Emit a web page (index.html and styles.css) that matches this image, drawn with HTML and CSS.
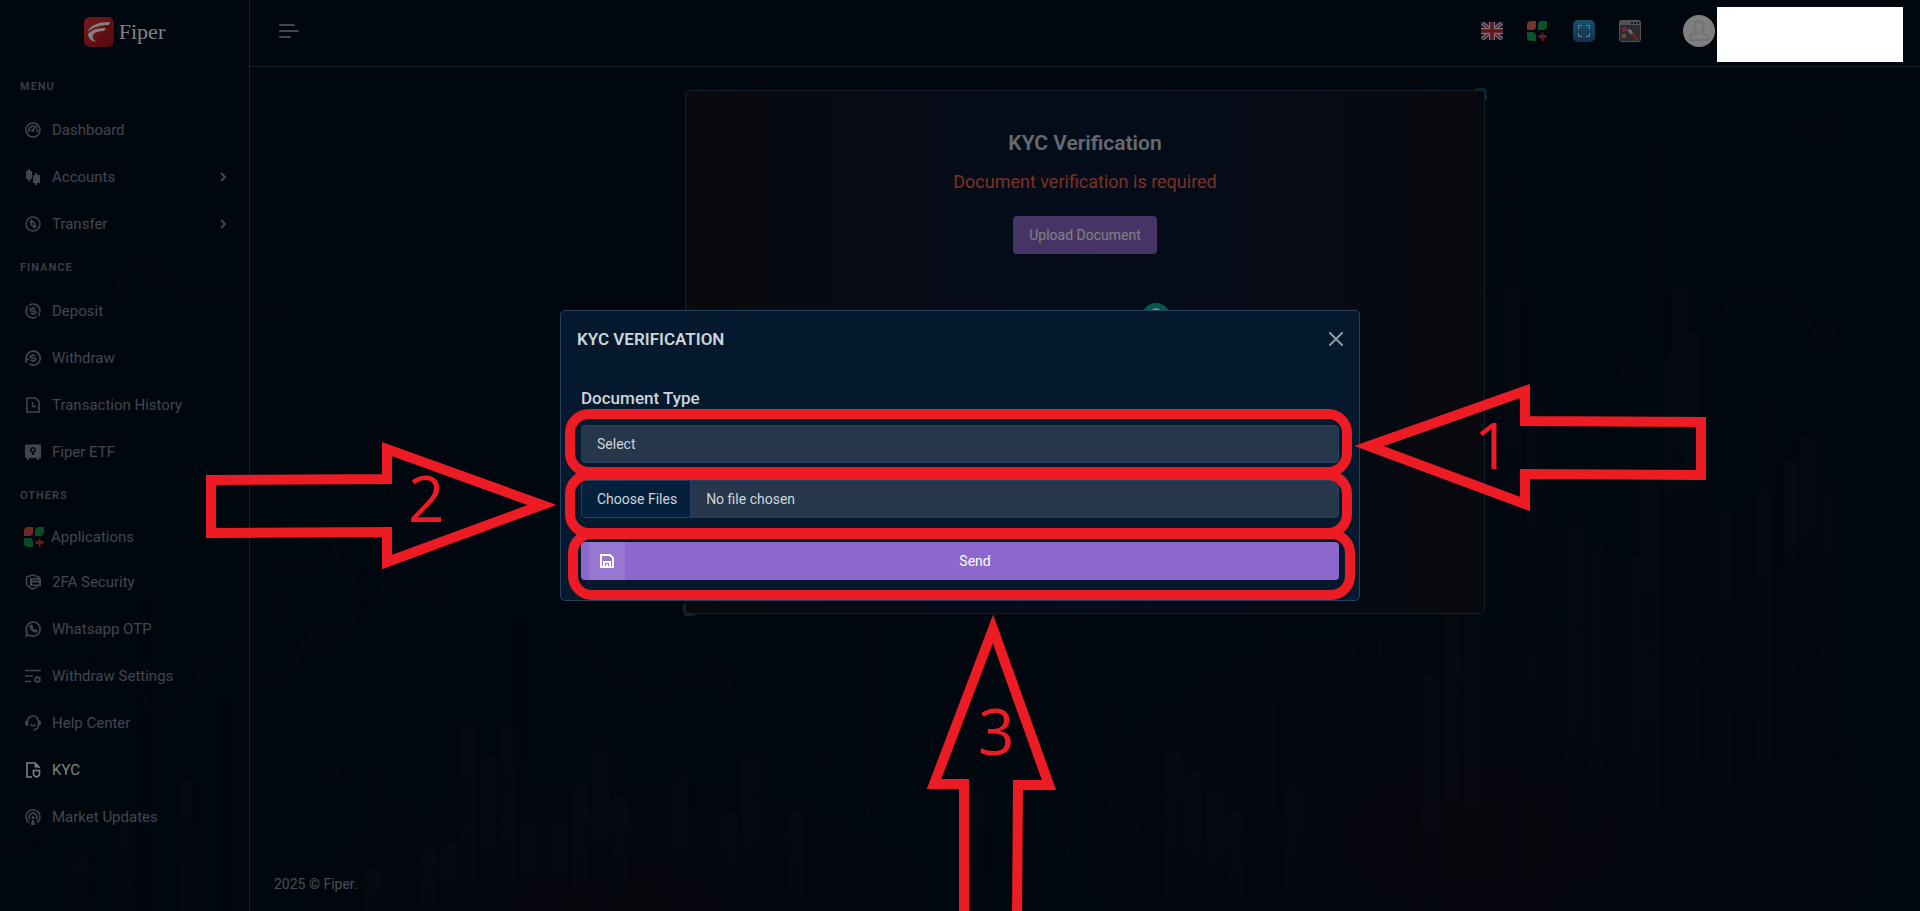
FILE: index.html
```html
<!DOCTYPE html>
<html lang="en">
<head>
    <meta charset="UTF-8">
    <meta name="viewport" content="width=device-width, initial-scale=1.0">
    <title>KYC Verification - Fiper</title>
    <link rel="stylesheet" href="styles.css">
</head>
<body>
    <!-- Background chart artwork -->
    <svg class="page-art" viewBox="0 0 1920 911" preserveAspectRatio="xMidYMax slice" aria-hidden="true">
        <defs>
            <linearGradient id="bar" x1="0" y1="0" x2="0" y2="1">
                <stop offset="0" stop-color="#182030"/>
                <stop offset="1" stop-color="#0b1020"/>
            </linearGradient>
            <radialGradient id="glow">
                <stop offset="0" stop-color="#100e1c"/>
                <stop offset="1" stop-color="#100e1c" stop-opacity="0"/>
            </radialGradient>
        </defs>
        <ellipse cx="620" cy="911" rx="330" ry="130" fill="url(#glow)"/>
        <ellipse cx="1480" cy="840" rx="420" ry="230" fill="url(#glow)"/>
        <g fill="url(#bar)" opacity=".4">
            <rect x="73" y="856" width="17" height="60" rx="8"/>
            <rect x="120" y="820" width="14" height="95" rx="7"/>
            <rect x="179" y="780" width="14" height="135" rx="7"/>
            <rect x="365" y="867" width="15" height="50" rx="7"/>
            <rect x="421" y="847" width="16" height="70" rx="8"/>
            <rect x="441" y="842" width="16" height="75" rx="8"/>
            <rect x="459" y="722" width="17" height="190" rx="8"/>
            <rect x="480" y="756" width="17" height="160" rx="8"/>
            <rect x="499" y="727" width="17" height="190" rx="8"/>
            <rect x="520" y="820" width="16" height="95" rx="8"/>
            <rect x="552" y="820" width="16" height="95" rx="8"/>
            <rect x="572" y="784" width="17" height="130" rx="8"/>
            <rect x="592" y="745" width="18" height="170" rx="8"/>
            <rect x="612" y="795" width="17" height="120" rx="8"/>
            <rect x="673" y="775" width="16" height="140" rx="8"/>
            <rect x="722" y="812" width="16" height="100" rx="8"/>
            <rect x="741" y="754" width="18" height="160" rx="8"/>
            <rect x="787" y="810" width="17" height="100" rx="8"/>
            <rect x="972" y="786" width="14" height="130" rx="7"/>
            <rect x="1165" y="751" width="17" height="160" rx="8"/>
            <rect x="1185" y="771" width="17" height="145" rx="8"/>
            <rect x="1206" y="791" width="17" height="125" rx="8"/>
            <rect x="1226" y="811" width="17" height="105" rx="8"/>
            <rect x="1285" y="786" width="17" height="130" rx="8"/>
            <rect x="1422" y="675" width="18" height="240" rx="8"/>
            <rect x="1444" y="590" width="17" height="320" rx="8"/>
            <rect x="1465" y="600" width="17" height="320" rx="8"/>
            <rect x="1504" y="283" width="17" height="600" rx="8"/>
            <rect x="1526" y="385" width="16" height="500" rx="8"/>
            <rect x="1566" y="522" width="17" height="380" rx="8"/>
            <rect x="1586" y="545" width="16" height="360" rx="8"/>
            <rect x="1626" y="557" width="17" height="330" rx="8"/>
            <rect x="1641" y="480" width="19" height="400" rx="8"/>
            <rect x="1664" y="355" width="16" height="500" rx="8"/>
            <rect x="1671" y="287" width="17" height="560" rx="8"/>
            <rect x="1685" y="332" width="14" height="520" rx="7"/>
            <rect x="1720" y="512" width="13" height="330" rx="6"/>
            <rect x="1757" y="488" width="15" height="330" rx="7"/>
            <rect x="1783" y="460" width="15" height="340" rx="7"/>
            <rect x="1799" y="436" width="16" height="350" rx="7"/>
            <rect x="1818" y="492" width="13" height="240" rx="6"/>
        </g>
        <g fill="none" stroke="#0a1222" stroke-width="2">
            <path d="M114 300q10-34 25-34 15 2 28 12c26 22 40 18 60 20 20 6 34 16 60 12"/>
            <path d="M95 660c40 5 40 46 68 50 34 0 30-56 66-56 22 4 32 26 48 26 24 0 20-48 44-60q32 20 40-18c6-26 10-70 40-80"/>
            <path d="M280 572c22 10 34-20 56-18 12 20 24 42 40 44 10-10 16-34 20-54"/>
            <path d="M560 640c50 20 60 48 90 50 26 2 42-22 64-24"/>
            <path d="M1470 290q36 10 60 5m190 25q20-40 54-26 30 16 50 52"/>
            <path d="M144 596v315M224 696v215M520 615v150M867 615v200M1067 655v200M1115 700v150M1274 630v180M1380 640v240M1513 185v100M1654 150v180M1766 400v90M382 760v150"/>
        </g>
        <g fill="#0d101f">
            <circle cx="151" cy="273" r="5"/>
            <circle cx="103" cy="664" r="10"/>
            <circle cx="26" cy="845" r="8"/>
            <circle cx="317" cy="634" r="10"/>
            <circle cx="337" cy="551" r="5"/>
            <circle cx="283" cy="606" r="4"/>
            <circle cx="425" cy="589" r="10"/>
            <circle cx="333" cy="775" r="7"/>
            <circle cx="402" cy="808" r="6"/>
            <circle cx="402" cy="826" r="4"/>
            <circle cx="725" cy="682" r="8"/>
            <circle cx="825" cy="760" r="6"/>
            <circle cx="1068" cy="655" r="5"/>
            <circle cx="1100" cy="777" r="5"/>
            <circle cx="1115" cy="806" r="8"/>
            <circle cx="1135" cy="829" r="6"/>
            <circle cx="1350" cy="649" r="8"/>
            <circle cx="1368" cy="642" r="7"/>
            <circle cx="1381" cy="629" r="6"/>
            <circle cx="1397" cy="712" r="5"/>
            <circle cx="1332" cy="756" r="6"/>
            <circle cx="1513" cy="195" r="7"/>
            <circle cx="1819" cy="130" r="11"/>
            <circle cx="1626" cy="373" r="7"/>
            <circle cx="1831" cy="335" r="5"/>
            <circle cx="1735" cy="664" r="6"/>
            <circle cx="1694" cy="757" r="7"/>
            <circle cx="1844" cy="756" r="6"/>
        </g>
    </svg>

    <div class="layout">
        <!-- Sidebar -->
        <aside class="sidebar">
            <a class="logo" href="#">
                <svg width="30" height="30" viewBox="0 0 30 30" aria-hidden="true">
                    <defs>
                        <linearGradient id="logo-red" x1="0" y1="0" x2="1" y2="1">
                            <stop offset="0" stop-color="#e8343e"/>
                            <stop offset="1" stop-color="#a80f14"/>
                        </linearGradient>
                    </defs>
                    <rect width="30" height="30" rx="6" fill="url(#logo-red)"/>
                    <path d="M3 15C7 8 14 5 26 5l-1 3C16 8 10 10 3 15z" fill="#fff"/>
                    <path d="M4 17c3-4 9-6 18-6l-2 3c-5 0-9 1-11 4-1 3 1 5 3 7-5-1-8-4-8-8z" fill="#fff"/>
                </svg>
                <span>Fiper</span>
            </a>

            <nav>
                <h6 class="menu-title">Menu</h6>
                <ul class="menu">
                    <li><a href="#">
                        <svg class="icon" viewBox="0 0 16 16"><circle cx="8" cy="8" r="7"/><path d="M4 10a4.500 4.500 0 0 1 6-5.500M12 7a4 4 0 0 1 0 3M7.500 8.500L12 4" /><circle class="fill" cx="7.500" cy="8.500" r="1.500"/></svg>
                        Dashboard</a></li>
                    <li><a href="#">
                        <svg class="icon" viewBox="0 0 16 16"><path class="fill" d="M3 0h2v2h2v8H5v2H3v-2H1V2h2zM10 4h2v2h3v8h-3v2h-2v-2H8V6h2z"/></svg>
                        Accounts
                        <svg class="chevron" width="8" height="10" viewBox="0 0 8 10"><path d="M2 1l4 4-4 4"/></svg></a></li>
                    <li><a href="#">
                        <svg class="icon" viewBox="0 0 16 16"><circle cx="8" cy="8" r="7"/><path d="M6.500 10V4.500M4.500 6.500l2-2 2 2M9.500 6v5.500M7.500 9.500l2 2 2-2"/></svg>
                        Transfer
                        <svg class="chevron" width="8" height="10" viewBox="0 0 8 10"><path d="M2 1l4 4-4 4"/></svg></a></li>
                </ul>

                <h6 class="menu-title">Finance</h6>
                <ul class="menu">
                    <li><a href="#">
                        <svg class="icon" viewBox="0 0 16 16"><path d="M4 2.300a7 7 0 0 1 10.800 7.200M12 13.700A7 7 0 0 1 1.200 6.500M2 3v4M14 13V9.500"/><path d="M10.500 5.500h-4a1.200 1.200 0 0 0 0 2.500h3a1.200 1.200 0 0 1 0 2.500h-4M8 4v1.500M8 10.500V12"/></svg>
                        Deposit</a></li>
                    <li><a href="#">
                        <svg class="icon" viewBox="0 0 16 16"><path d="M1.500 10A7 7 0 1 1 4 13.700M1 13V9.500h3"/><path d="M10.500 5.500h-4a1.200 1.200 0 0 0 0 2.500h3a1.200 1.200 0 0 1 0 2.500h-4M8 4v1.500M8 10.500V12"/></svg>
                        Withdraw</a></li>
                    <li><a href="#">
                        <svg class="icon" viewBox="0 0 16 16"><path d="M2 1h8.500L14 4.500V15H2zM7.500 5v4.500H11"/></svg>
                        Transaction History</a></li>
                    <li><a href="#">
                        <svg class="icon" viewBox="0 0 16 16"><path class="fill" fill-rule="evenodd" d="M1 .5h14q1 0 1 1V14h-2v2h-2v-2H4v2H2v-2H0V1.500q0-1 1-1zM8 3a3 3 0 0 0-1 5.800V11h2V8.800A3 3 0 0 0 8 3zm0 1.600a1.400 1.400 0 1 1 0 2.800 1.400 1.400 0 0 1 0-2.800z"/></svg>
                        Fiper ETF</a></li>
                </ul>

                <h6 class="menu-title">Others</h6>
                <ul class="menu">
                    <li><a class="apps-link" href="#">
                        <svg width="20" height="20" viewBox="0 0 20 20"><path d="M4 0h5v5q0 4-4 4H0V4q0-4 4-4z" fill="#e0524f"/><path d="M15 0h5v5q0 4-4 4h-5V4q0-4 4-4zM0 11h5q4 0 4 4v5H4q-4 0-4-4z" fill="#12964c"/><path d="M14.500 11.500h2v2.500h3v3h-3v3h-2v-3h-3v-3h3z" fill="#cf2b33"/></svg>
                        Applications</a></li>
                    <li><a href="#">
                        <svg class="icon" viewBox="0 0 16 16"><path d="M14 4V3L7.500 1 1.500 3v6q0 3 6 6 3-1 5-3"/><path class="fill" fill-rule="evenodd" d="M5 4h11v8H5zm2 1.500v1h7v-1zm0 3v2h7v-2z"/></svg>
                        2FA Security</a></li>
                    <li><a href="#">
                        <svg class="icon" viewBox="0 0 16 16"><path d="M1.200 15l.9-3.500A7 7 0 1 1 4.500 14z"/><path d="M5.500 4.500q-1 1.500 1 4 2.500 2.800 4.500 2.500.8-.5.800-1.300L9.800 9l-.8.800Q7.500 9 6.800 7.500l.7-.8-.8-2z"/></svg>
                        Whatsapp OTP</a></li>
                    <li><a href="#">
                        <svg class="icon" viewBox="0 0 16 16"><path d="M0 2.500h16M0 8h8M0 13.500h6"/><circle cx="12.500" cy="11.500" r="2.300"/><path d="M12.500 8v1M12.500 14v1M9.500 9.800l.8.500M14.700 12.700l.8.500M9.500 13.200l.8-.5M14.700 10.300l.8-.5"/></svg>
                        Withdraw Settings</a></li>
                    <li><a href="#">
                        <svg class="icon" viewBox="0 0 16 16"><path d="M2.500 10V6.500a5.500 5.500 0 0 1 11 0V10q0 4-5 5M5.500 9.500q2.500 2.500 5 0"/><path class="fill" d="M3 5v6Q0 11 0 8t3-3zM13 5v6q3 0 3-3t-3-3z"/></svg>
                        Help Center</a></li>
                    <li><a class="active" href="#">
                        <svg class="icon" viewBox="0 0 16 16"><path d="M7 15H2V1h8l4 4v1"/><path class="fill" d="M9.500 1v4.500H14z"/><path d="M8.500 8.500h6V12q0 2-3 3-3-1-3-3z"/></svg>
                        KYC</a></li>
                    <li><a href="#">
                        <svg class="icon" viewBox="0 0 16 16"><path d="M4 13.500a7 7 0 1 1 8 0M5 10.500a3.800 3.800 0 1 1 6 0"/><circle class="fill" cx="8" cy="8.500" r="1.500"/><path class="fill" d="M7 11h2l1 5H6z"/></svg>
                        Market Updates</a></li>
                </ul>
            </nav>
        </aside>

        <div class="content">
            <!-- Topbar -->
            <header class="topbar">
                <button class="hamburger" type="button" aria-label="Toggle menu">
                    <span></span>
                    <span></span>
                    <span></span>
                </button>
                <div class="topbar-tools">
                    <button type="button" aria-label="Language">
                        <svg width="22" height="18" viewBox="0 0 22 18"><rect width="22" height="18" rx="2" fill="#1c2f86"/><path d="M1 1l20 16M21 1L1 17" stroke="#e8e8ee" stroke-width="4"/><path d="M1 1l20 16M21 1L1 17" stroke="#d02536" stroke-width="1.300"/><path d="M11 0v18M0 9h22" stroke="#e8e8ee" stroke-width="6"/><path d="M11 0v18M0 9h22" stroke="#d02536" stroke-width="3.500"/></svg>
                    </button>
                    <button type="button" aria-label="Applications">
                        <svg width="22" height="20" viewBox="0 0 22 20"><path d="M4 0h5v5q0 4-4 4H0V4q0-4 4-4z" fill="#f0625c"/><path d="M15 0h5v5q0 4-4 4h-5V4q0-4 4-4zM0 11h5q4 0 4 4v5H4q-4 0-4-4z" fill="#14a553"/><path d="M14.500 11.500h2v2.500h3v3h-3v3h-2v-3h-3v-3h3z" fill="#e0303a"/></svg>
                    </button>
                    <button type="button" aria-label="Full screen">
                        <svg width="22" height="22" viewBox="0 0 22 22"><defs><linearGradient id="blue" x1="0" y1="0" x2="0" y2="1"><stop offset="0" stop-color="#2b9fd0"/><stop offset="1" stop-color="#2a62a8"/></linearGradient></defs><rect width="22" height="22" rx="5" fill="url(#blue)"/><path d="M5.500 9V5.500H9M13 5.500h3.500V9M16.500 13v3.500H13M9 16.500H5.500V13" fill="none" stroke="#fff"/></svg>
                    </button>
                    <button type="button" aria-label="Theme">
                        <svg width="22" height="22" viewBox="0 0 22 22"><rect width="22" height="22" rx="3" fill="#a4a6aa"/><rect x="1" y="5" width="20" height="16" rx="1" fill="#57585a"/><path d="M12 2h2v2h-2zM15 2h2v2h-2zM18 2h2v2h-2z" fill="#333"/><rect x="3" y="7" width="5" height="5" fill="#cf4a92"/><rect x="3" y="14" width="4" height="4" fill="#c99a5c"/><path d="M12 13l7 7" stroke="#dd4a3a" stroke-width="2.500"/><path d="M9 9q4 0 5 4l-2 1q-3-1-3-5z" fill="#ddd"/></svg>
                    </button>
                    <button class="avatar" type="button" aria-label="Profile">
                        <svg width="32" height="32" viewBox="0 0 32 32"><circle cx="16" cy="16" r="16" fill="#fff"/><path d="M12 15q-1-2-1-4 0-5 5-5t5 5q0 2-1 4-1 2-2 2 0 1 3 2 4 1 4 4v2H7v-2q0-3 4-4 3-1 3-2-1 0-2-2z" fill="none" stroke="#dcdcdc" stroke-width="1.500"/></svg>
                    </button>
                    <div class="user-name"></div>
                </div>
            </header>

            <main class="page">
                <section class="kyc-card">
                    <h4>KYC Verification</h4>
                    <p class="text-danger">Document verification is required</p>
                    <button class="btn btn-primary" type="button">Upload Document</button>
                    <svg class="person" width="60" height="150" viewBox="0 0 60 150" aria-hidden="true">
                        <circle cx="30" cy="14" r="14" fill="#0ab39c"/>
                        <circle cx="30" cy="11" r="6" fill="#fff"/>
                    </svg>
                </section>
            </main>

            <footer class="footer">2025 © Fiper.</footer>
        </div>
    </div>

    <!-- KYC Modal -->
    <div class="modal-backdrop"></div>
    <div class="user-cover"></div>
    <div class="modal-wrap">
        <div class="modal" role="dialog" aria-labelledby="modal-title">
            <div class="modal-header">
                <h5 id="modal-title">KYC VERIFICATION</h5>
                <button class="btn-close" type="button" aria-label="Close">
                    <svg width="14" height="14" viewBox="0 0 14 14"><path d="M0 0l14 14M14 0L0 14"/></svg>
                </button>
            </div>
            <form class="modal-body">
                <label for="document-type">Document Type</label>
                <select class="form-control" id="document-type" name="document_type">
                    <option>Select</option>
                </select>
                <input class="form-control" type="file" id="document-files" name="files" aria-label="Document files" multiple>
                <button class="btn btn-primary btn-send" type="submit">
                    <span class="btn-icon">
                        <svg width="14" height="14" viewBox="0 0 14 14"><path d="M1 1h9l3 3v9H1zM4 13V8h6v5M7 10v3"/></svg>
                    </span>
                    Send
                </button>
            </form>
        </div>
    </div>

    <!-- Step markers -->
    <svg class="steps" viewBox="0 0 1920 911" preserveAspectRatio="xMidYMin slice">
        <g class="step-lines">
            <rect x="570" y="414" width="777" height="58" rx="19"/>
            <rect x="570" y="475" width="777" height="58" rx="19"/>
            <rect x="573" y="534" width="777" height="61" rx="19"/>
            <path d="M1369 446l156-55v30l176 1v53l-176-1v30z"/>
            <path d="M542 505l-155-56v30l-176 1v53l176-1v30z"/>
            <path d="M964 920V784h-30l59-155 56 156h-31l-1 135"/>
        </g>
        <text x="1474" y="469">1</text>
        <text x="408" y="522">2</text>
        <text x="978" y="755">3</text>
    </svg>
</body>
</html>
```
FILE: styles.css
```css
/* General Styles */
*,
*::before,
*::after {
    box-sizing: border-box;
}

body {
    margin: 0;
    font-family: Roboto, "Noto Sans", sans-serif;
    font-size: 14px;
    background: #030f1d;
    color: #ced4da;
    overflow: hidden;
}

button {
    font: inherit;
    color: inherit;
    background: none;
    border: none;
    padding: 0;
    cursor: pointer;
}

a {
    color: inherit;
    text-decoration: none;
}

.page-art {
    position: absolute;
    inset: 0;
    width: 100%;
    height: 100%;
}

.layout {
    position: relative;
    display: flex;
    min-height: 100vh;
}

/* Sidebar */
.sidebar {
    width: 250px;
    border-right: 1px solid #27405f;
    flex-shrink: 0;
}

.logo {
    display: flex;
    align-items: center;
    justify-content: center;
    gap: 5px;
    height: 66px;
    padding-bottom: 2px;
    font-family: "Liberation Serif", serif;
    font-size: 22px;
    color: #fff;
}

.menu-title {
    display: flex;
    align-items: center;
    height: 40px;
    margin: 0;
    padding: 0 20px;
    font-size: 11px;
    font-weight: 600;
    letter-spacing: 1px;
    text-transform: uppercase;
    color: #787c8c;
}

.menu {
    list-style: none;
    margin: 0;
    padding: 0;
}

.menu a {
    display: flex;
    align-items: center;
    gap: 11px;
    height: 47px;
    padding: 0 22px 0 25px;
    font-size: 15px;
    color: #868a9c;
}

.menu a.active {
    color: #fff;
}

.menu a.apps-link {
    height: 43px;
    gap: 7px;
    padding-left: 24px;
}

.icon {
    width: 16px;
    height: 16px;
    fill: none;
    stroke: currentColor;
    stroke-width: 1.6;
    overflow: visible;
}

.icon .fill {
    fill: currentColor;
    stroke: none;
}

.chevron {
    margin-left: auto;
    fill: none;
    stroke: currentColor;
    stroke-width: 2;
}

/* Topbar */
.content {
    display: flex;
    flex-direction: column;
    flex: 1;
}

.topbar {
    display: flex;
    align-items: center;
    justify-content: space-between;
    height: 67px;
    padding: 0 17px 5px 29px;
    border-bottom: 1px solid #27405f;
}

.hamburger {
    display: flex;
    flex-direction: column;
    gap: 4px;
}

.hamburger span {
    width: 20px;
    height: 2px;
    border-radius: 1px;
    background: #878a99;
}

.hamburger span:first-child {
    width: 16px;
}

.hamburger span:last-child {
    width: 12px;
}

.topbar-tools {
    display: flex;
    align-items: center;
    gap: 24px;
}

.topbar-tools button {
    display: flex;
}

.topbar-tools .avatar {
    margin-left: 18px;
}

.user-name {
    width: 164px;
}

/* KYC Card */
.page {
    flex: 1;
    padding: 23px 24px;
}

.kyc-card {
    position: relative;
    display: flex;
    flex-direction: column;
    align-items: center;
    max-width: 800px;
    margin: 0 auto;
    padding: 40px 16px 160px;
    border: 1px solid #27405f;
    border-radius: 4px;
    background: linear-gradient(90deg, #12131d, #081a38, #12131d);
}

.kyc-card::before,
.kyc-card::after {
    content: "";
    position: absolute;
    width: 12px;
    height: 12px;
}

.kyc-card::before {
    top: -3px;
    right: -3px;
    border-top: 3px solid #27405f;
    border-right: 3px solid #27405f;
    border-top-right-radius: 4px;
}

.kyc-card::after {
    bottom: -3px;
    left: -3px;
    border-bottom: 3px solid #27405f;
    border-left: 3px solid #27405f;
    border-bottom-left-radius: 4px;
}

.kyc-card h4 {
    margin: 0 0 16px;
    font-size: 21px;
    line-height: 24px;
    font-weight: 600;
    color: #ced4da;
}

.text-danger {
    margin: 0 0 23px;
    font-size: 18px;
    line-height: 22px;
    font-weight: 400;
    color: #f06548;
}

.person {
    margin: 49px 0 0 142px;
}

.footer {
    padding: 0 24px 17px;
    line-height: 20px;
    color: #9599a8;
}

/* Buttons */
.btn {
    height: 38px;
    padding: 0 16px;
    border-radius: 4px;
    color: #fff;
}

.btn-primary {
    background: #8c68cd;
}

/* Modal */
.modal-backdrop {
    position: absolute;
    inset: 0;
    background: rgba(0, 0, 0, 0.5);
}

.user-cover {
    position: absolute;
    top: 7px;
    right: 17px;
    width: 186px;
    height: 55px;
    background: #fff;
}

.modal-wrap {
    position: absolute;
    inset: 0;
    display: flex;
    align-items: center;
    justify-content: center;
}

.modal {
    width: 800px;
    border: 1px solid #27405f;
    border-radius: 5px;
    background: #04192d;
}

.modal-header {
    display: flex;
    align-items: center;
    justify-content: space-between;
    padding: 16px;
}

.modal-header h5 {
    margin: 0;
    font-size: 17px;
    line-height: 24px;
    font-weight: 600;
}

.btn-close {
    display: flex;
}

.btn-close svg {
    fill: none;
    stroke: #8f98a5;
    stroke-width: 2;
}

.modal-body {
    display: flex;
    flex-direction: column;
    padding: 20px;
}

.modal-body label {
    margin-bottom: 16px;
    font-size: 17px;
    line-height: 22px;
    font-weight: 500;
}

.form-control {
    appearance: none;
    width: 100%;
    height: 38px;
    margin: 0 0 17px;
    padding: 0 15px;
    border: 1px solid #27405f;
    border-radius: 4px;
    background: #26374b;
    font: inherit;
    line-height: 36px;
    color: #ced4da;
}

input.form-control {
    margin-bottom: 24px;
}

.form-control::file-selector-button {
    height: 36px;
    margin: 0 15px 0 -15px;
    padding: 0 13px 0 15px;
    border: none;
    border-right: 1px solid #27405f;
    background: #05203c;
    font: inherit;
    color: #ced4da;
}

.btn-send {
    position: relative;
    padding-left: 46px;
}

.btn-icon {
    position: absolute;
    top: 0;
    bottom: 0;
    left: 8px;
    display: flex;
    align-items: center;
    justify-content: center;
    width: 36px;
    background: rgba(255, 255, 255, 0.1);
}

.btn-icon svg {
    fill: none;
    stroke: #fff;
    stroke-width: 2;
}

/* Step markers */
.steps {
    position: absolute;
    inset: 0;
    width: 100%;
    height: 100%;
    pointer-events: none;
}

.step-lines {
    fill: none;
    stroke: #ed1c24;
    stroke-width: 10;
    stroke-miterlimit: 10;
}

.steps text {
    font-family: "Open Sans", sans-serif;
    font-size: 64px;
    fill: #ed1c24;
}
```
